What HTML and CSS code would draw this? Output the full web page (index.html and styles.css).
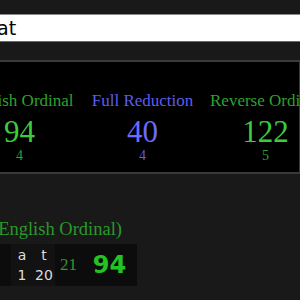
FILE: index.html
```html
<!DOCTYPE html>
<html lang="en">
  <head>
    <meta charset="UTF-8" />
    <meta name="viewport" content="width=device-width, initial-scale=1.0" />
    <title>Gematria</title>
    <link rel="stylesheet" href="styles.css">
  </head>
  <body>
    <!-- Phrase input -->
    <div class="search">
      <input type="text" id="phrase" value="at" />
    </div>

    <!-- Cipher totals -->
    <div class="totals">
      <div class="cipher green">
        <div class="name">English Ordinal</div>
        <div class="value">94</div>
        <div class="count">4</div>
      </div>
      <div class="cipher blue">
        <div class="name">Full Reduction</div>
        <div class="value">40</div>
        <div class="count">4</div>
      </div>
      <div class="cipher green">
        <div class="name">Reverse Ordinal</div>
        <div class="value">122</div>
        <div class="count">5</div>
      </div>
    </div>

    <!-- Breakdown -->
    <h3 class="breakdown-title">(English Ordinal)</h3>
    <div class="breakdown">
      <div class="cell word-sum">3</div>
      <div class="cell letters">
        <div class="letter"><span>a</span><span>1</span></div>
        <div class="letter"><span>t</span><span>20</span></div>
      </div>
      <div class="cell word-sum">21</div>
      <div class="cell total">94</div>
    </div>
  </body>
</html>
```

FILE: styles.css
```css
/* General Styling */
body {
  margin: 0;
  padding: 0;
  background-color: #191919;
  overflow: hidden;
  font-family: "Liberation Serif", serif;
}

/* Input */
.search {
  padding-top: 14px;
  margin-left: -12px;
}

#phrase {
  box-sizing: border-box;
  width: 340px;
  height: 28px;
  margin: 0;
  padding: 0 0 0 9px;
  border: none;
  border-top: 1px solid #8a8a8a;
  border-bottom: 1px solid #6a6a6a;
  background: #fff;
  color: #000;
  font-family: "DejaVu Sans", Verdana, sans-serif;
  font-size: 19px;
  outline: none;
}

/* Totals panel */
.totals {
  display: flex;
  margin: 18px 0 0 -60px;
  width: 357px;
  height: 81px;
  padding-top: 29px;
  background: #000;
  border: 2px solid #3a3a3a;
}

.cipher {
  width: 123px;
  text-align: center;
  flex-shrink: 0;
}

.cipher:first-child {
  margin-left: 16px;
}

.name {
  font-size: 17px;
  line-height: 20px;
  white-space: nowrap;
}

.value {
  font-size: 31px;
  line-height: 32px;
  margin-top: 5px;
}

.count {
  font-size: 14px;
  line-height: 16px;
}

.green .name,
.green .count {
  color: #2fa12f;
}

.green .value {
  color: #3ccc3c;
}

.blue .name,
.blue .count {
  color: #5c5cf0;
}

.blue .value {
  color: #6b6bff;
}

/* Breakdown */
.breakdown-title {
  margin: 45px 0 0 -8px;
  font-size: 18.5px;
  font-weight: normal;
  line-height: 20px;
  color: #2a9a2a;
  white-space: nowrap;
}

.breakdown {
  display: flex;
  align-items: stretch;
  margin: 5px 0 0 -20px;
  width: 157px;
  height: 42px;
  background: #0c0c0c;
}

.cell {
  display: flex;
  align-items: center;
  justify-content: center;
}

.word-sum {
  width: 27px;
  color: #2a9a2a;
  font-size: 17px;
}

.word-sum:first-child {
  width: 31px;
  color: #33bb33;
}

.letters {
  width: 44px;
  background: #121212;
}

.letter {
  width: 22px;
  display: flex;
  flex-direction: column;
  align-items: center;
  font-family: "DejaVu Sans", Verdana, sans-serif;
  font-size: 14px;
  line-height: 20px;
  color: #dddddd;
}

.total {
  width: 55px;
  color: #22c322;
  font-family: "DejaVu Sans", Verdana, sans-serif;
  font-weight: bold;
  font-size: 24px;
}
```
